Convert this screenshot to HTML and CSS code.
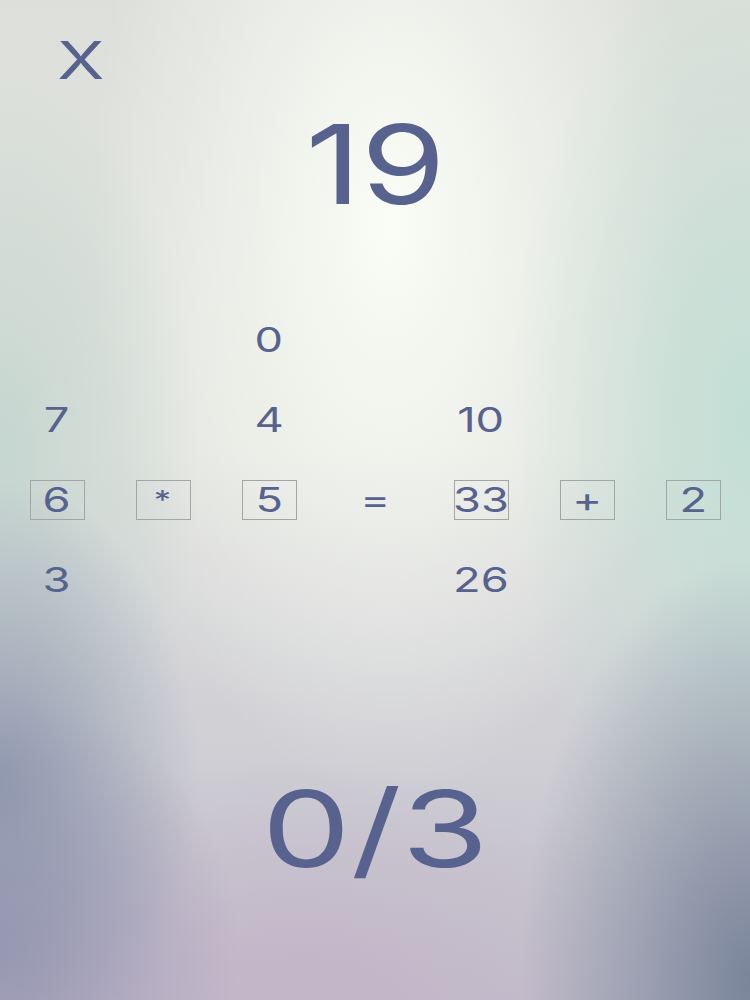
FILE: index.html
```html
<!DOCTYPE html>
<html>
<head>
<meta charset="utf-8">
<link rel="stylesheet" href="styles.css">
</head>
<body>
<div class="screen">
  <div class="top"><span class="t close">X</span></div>
  <div class="target"><span class="t t19">19</span></div>
  <div class="grid">
    <div class="cell"></div><div class="cell"></div><div class="cell"><span class="t">0</span></div><div class="cell"></div><div class="cell"></div><div class="cell"></div><div class="cell"></div>
    <div class="cell"><span class="t">7</span></div><div class="cell"></div><div class="cell"><span class="t">4</span></div><div class="cell"></div><div class="cell"><span class="t">10</span></div><div class="cell"></div><div class="cell"></div>
    <div class="cell"><span class="box"><span class="t">6</span></span></div><div class="cell"><span class="box op"><span class="t">*</span></span></div><div class="cell"><span class="box"><span class="t">5</span></span></div><div class="cell"><span class="t">=</span></div><div class="cell"><span class="box"><span class="t">33</span></span></div><div class="cell"><span class="box"><span class="t">+</span></span></div><div class="cell"><span class="box"><span class="t">2</span></span></div>
    <div class="cell"><span class="t">3</span></div><div class="cell"></div><div class="cell"></div><div class="cell"></div><div class="cell"><span class="t">26</span></div><div class="cell"></div><div class="cell"></div>
  </div>
  <div class="score"><span class="t">0/3</span></div>
</div>
</body>
</html>
```
FILE: styles.css
```css
html, body {
  margin: 0;
  padding: 0;
}
body {
  width: 750px;
  height: 1000px;
  overflow: hidden;
  font-family: "Inter", "Open Sans", sans-serif;
  color: #58628f;
}
.screen {
  width: 750px;
  height: 1000px;
  display: flex;
  flex-direction: column;
  background:
    radial-gradient(ellipse 230px 420px at 100% 98%, rgba(118,130,152,0.95), rgba(118,130,152,0) 100%),
    radial-gradient(ellipse 200px 300px at 0% 78%, rgba(136,146,170,0.85), rgba(136,146,170,0) 100%),
    radial-gradient(ellipse 240px 260px at 0% 95%, rgba(150,146,176,0.8), rgba(150,146,176,0) 100%),
    radial-gradient(ellipse 400px 240px at 40% 100%, rgba(194,180,200,0.9), rgba(194,180,200,0) 100%),
    radial-gradient(ellipse 240px 480px at 100% 42%, rgba(192,222,212,0.95), rgba(192,222,212,0) 100%),
    radial-gradient(ellipse 200px 380px at 0% 45%, rgba(194,212,206,0.9), rgba(194,212,206,0) 100%),
    radial-gradient(ellipse 300px 580px at 52% 22%, rgba(250,252,246,1), rgba(250,252,246,0) 100%),
    linear-gradient(to bottom, #dcdfda 0%, #e2e4df 45%, #d2d2d6 70%, #c2bfcb 100%);
}
.t {
  display: inline-block;
  transform: scaleX(1.33);
}
.top {
  padding: 35px 0 0 63px;
  height: 52px;
}
.close {
  font-size: 52px;
  line-height: 52px;
  font-weight: 400;
}
.target {
  margin-top: 22px;
  text-align: center;
  font-size: 110px;
  line-height: 110px;
  height: 110px;
}
.t19 {
  transform: scaleX(1.24);
}
.grid {
  margin-top: 81px;
  padding-left: 4px;
  display: grid;
  grid-template-columns: repeat(7, 106px);
  grid-auto-rows: 80px;
}
.cell {
  display: flex;
  align-items: center;
  justify-content: center;
  font-size: 34px;
  line-height: 1;
}
.box {
  box-sizing: border-box;
  width: 55px;
  height: 40px;
  border: 1px solid #a3a6a6;
  display: flex;
  align-items: center;
  justify-content: center;
}
.op {
  font-size: 26px;
}
.score {
  margin-top: 156px;
  text-align: center;
  font-size: 106px;
  line-height: 106px;
}
```
